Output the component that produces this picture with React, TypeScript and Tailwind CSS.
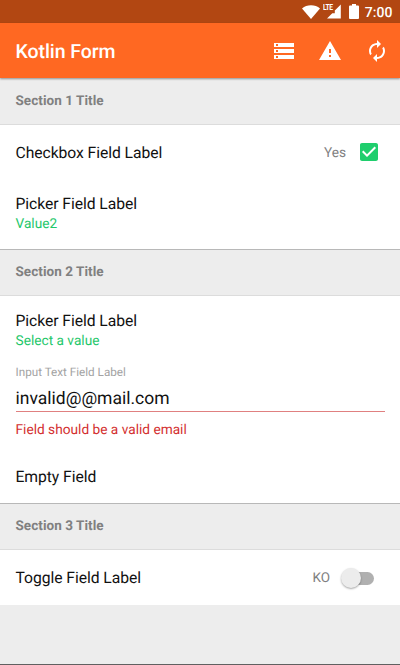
import React from "react";

function Icon({ d, className }: { d: string; className: string }) {
  return (
    <svg viewBox="0 0 24 24" fill="currentColor" className={className}>
      <path d={d} />
    </svg>
  );
}

const STORAGE = "M2 20h20v-4H2v4zm2-3h2v2H4v-2zM2 4v4h20V4H2zm4 3H4V5h2v2zm-4 7h20v-4H2v4zm2-3h2v2H4v-2z";
const WARNING = "M1 21h22L12 2 1 21zm12-3h-2v-2h2v2zm0-4h-2v-4h2v4z";
const AUTORENEW =
  "M12 6v3l4-4-4-4v3c-4.42 0-8 3.58-8 8 0 1.57.46 3.03 1.24 4.26L6.7 14.8c-.45-.83-.7-1.79-.7-2.8 0-3.31 2.69-6 6-6zm6.76 1.74L17.3 9.2c.44.84.7 1.79.7 2.8 0 3.31-2.69 6-6 6v-3l-4 4 4 4v-3c4.42 0 8-3.58 8-8 0-1.57-.46-3.03-1.24-4.26z";
const CHECKBOX =
  "M19 3H5c-1.11 0-2 .9-2 2v14c0 1.1.89 2 2 2h14c1.11 0 2-.9 2-2V5c0-1.1-.89-2-2-2zm-9 14l-5-5 1.41-1.41L10 14.17l7.59-7.59L19 8l-9 9z";

function StatusBar() {
  return (
    <div className="flex h-[23px] items-center justify-end bg-[#b24712] pr-[7.5px] text-white">
      <svg viewBox="0 0 18 14" className="h-[14px] w-[18px]" fill="currentColor">
        <path d="M0 3.4C2.5 1.3 5.5.2 9 .2s6.500 1.100 9 3.200L9 14z" />
      </svg>
      <div className="relative ml-[3px] h-[15px] w-[18px]">
        <svg viewBox="0 0 18 15" className="h-[15px] w-[18px]" fill="currentColor">
          <path d="M17.800 .5V14.500H4L9.300 9.300h2.500V6.500z" />
        </svg>
        <span className="absolute left-0 top-0 origin-left scale-x-[0.78] text-[8.500px] font-bold leading-[8px] tracking-[-0.5px]">LTE</span>
      </div>
      <svg viewBox="0 0 10 15" className="ml-[7.500px] h-[15px] w-[10px]" fill="currentColor">
        <path d="M3 0h4v1.500h2q1 0 1 1V14q0 1-1 1H1q-1 0-1-1V2.500q0-1 1-1h2z" />
      </svg>
      <span className="ml-[6px] pt-[2px] text-[14px] font-medium leading-none tracking-[0.05px]">7:00</span>
    </div>
  );
}

function AppBar() {
  return (
    <header className="relative z-10 flex h-[55px] items-center bg-[#ff6822] pl-[15.5px] pr-[11.500px] text-white shadow-[0_1px_2px_rgba(0,0,0,0.4)]">
      <h1 className="flex-1 pt-[2px] text-[19.5px] font-medium leading-none tracking-[-0.08px]">Kotlin Form</h1>
      <div className="flex gap-[22.5px]">
        <Icon d={STORAGE} className="size-6" />
        <Icon d={WARNING} className="size-6" />
        <Icon d={AUTORENEW} className="size-6" />
      </div>
    </header>
  );
}

function SectionTitle({ children, first = false }: { children: React.ReactNode; first?: boolean }) {
  return (
    <div
      className={`flex h-[47px] items-center border-b border-b-[#dcdcdc] bg-[#ededed] px-[15.5px] text-[13.500px] font-bold leading-[18px] text-[#808080] ${
        first ? "" : "border-t border-t-[#b8b8b8] pb-[2px]"
      }`}
    >
      <span className="tracking-[0.05px]">{children}</span>
    </div>
  );
}

function Label({ children }: { children: React.ReactNode }) {
  return <div className="text-[15.700px] leading-[20px] tracking-[-0.06px] text-[#111]">{children}</div>;
}

function Picker({ label, value }: { label: string; value: string }) {
  return (
    <div>
      <Label>{label}</Label>
      <div className="pt-[1px] text-[13.700px] leading-[19px] text-[#1fc76b]">{value}</div>
    </div>
  );
}

export default function App() {
  return (
    <div className="flex h-[665px] w-[400px] flex-col overflow-hidden border-b border-[#606060] bg-[#ededed] font-['Roboto',sans-serif] [text-rendering:geometricPrecision]">
      <StatusBar />
      <AppBar />
      <SectionTitle first>Section 1 Title</SectionTitle>
      <section className="h-[124px] bg-white px-[15.5px]">
        <div className="flex h-[54px] items-center justify-between pt-[1px]">
          <Label>Checkbox Field Label</Label>
          <div className="flex items-center">
            <span className="mr-[11px] text-[13.700px] leading-[20px] text-[#808080]">Yes</span>
            <Icon d={CHECKBOX} className="mb-px mr-[3.500px] size-[24px] text-[#1fce6d]" />
          </div>
        </div>
        <div className="pt-[15px]">
          <Picker label="Picker Field Label" value="Value2" />
        </div>
      </section>
      <SectionTitle>Section 2 Title</SectionTitle>
      <section className="h-[207px] bg-white px-[15.5px] pt-[15px]">
        <Picker label="Picker Field Label" value="Select a value" />
        <div className="mt-[13px] text-[11.700px] leading-[16px] text-[#a3a3a3]">Input Text Field Label</div>
        <div className="mt-[5px] h-[27px] border-b border-b-[#e08080] text-[17.500px] leading-[28px] text-[#111]">invalid@@mail.com</div>
        <div className="mt-[9px] text-[13.700px] leading-[18px] text-[#d32f2f]">Field should be a valid email</div>
        <div className="mt-[28px]">
          <Label>Empty Field</Label>
        </div>
      </section>
      <SectionTitle>Section 3 Title</SectionTitle>
      <section className="flex h-[55px] items-center justify-between bg-white pl-[15.5px] pr-[26px] pt-px">
        <Label>Toggle Field Label</Label>
        <div className="flex items-center">
          <span className="mr-[11px] text-[13.500px] leading-[20px] text-[#808080]">KO</span>
          <div className="flex h-[13px] w-[33px] items-center rounded-full bg-gradient-to-r from-transparent from-30% to-[#b0b0b0] to-30%">
            <div className="size-[20px] shrink-0 rounded-full bg-[#ececec] shadow-[0_1px_2px_rgba(0,0,0,0.35)]" />
          </div>
        </div>
      </section>
    </div>
  );
}
